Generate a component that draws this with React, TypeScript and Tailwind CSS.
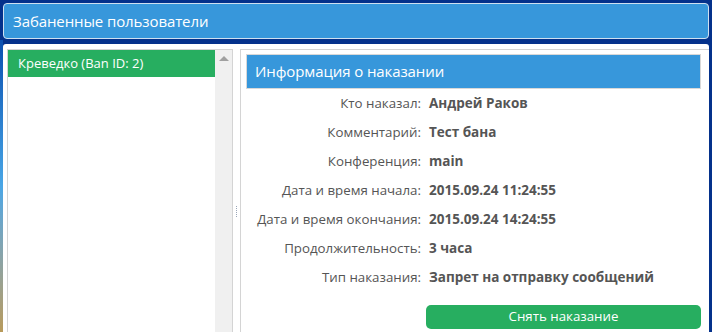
import React from 'react';

const rows = [
  { label: 'Кто наказал:', value: 'Андрей Раков' },
  { label: 'Комментарий:', value: 'Тест бана' },
  { label: 'Конференция:', value: 'main' },
  { label: 'Дата и время начала:', value: '2015.09.24 11:24:55' },
  { label: 'Дата и время окончания:', value: '2015.09.24 14:24:55' },
  { label: 'Продолжительность:', value: '3 часа' },
  { label: 'Тип наказания:', value: 'Запрет на отправку сообщений' },
];

export default function App() {
  return (
    <div className="relative w-[712px] h-[332px] overflow-hidden bg-[#04318b] flex flex-col pt-[3px] pl-[3px] pr-[3px] font-['Open_Sans','Noto_Sans',sans-serif]">
      {/* wallpaper peeking at the left edge */}
      <div className="absolute left-0 top-[40px] bottom-0 w-[3px] bg-gradient-to-b from-[#0b4fb0] via-[#49a6e6] to-[#b89a5a]" />

      {/* Window title */}
      <div className="h-[36px] shrink-0 rounded-[4px] bg-[#3797db] border border-[#cfe0f0] flex items-center pl-[9px] text-white text-[15px] tracking-[-0.1px]">
        Забаненные пользователи
      </div>

      {/* Body */}
      <div className="mt-[5px] flex-1 bg-white rounded-t-[3px] flex pl-[4px] pt-[5px] relative">
        {/* Left list */}
        <div className="w-[226px] flex border-l border-r border-t border-[#d4d4d4]">
          <div className="flex-1">
            <div className="h-[27px] bg-[#27ae60] text-white text-[13px] flex items-center pl-[10px]">
              Креведко (Ban ID: 2)
            </div>
          </div>
          <div className="w-[17px] bg-[#f0f0f0] flex justify-center pt-[6px]">
            <div className="w-0 h-0 border-l-[5px] border-r-[5px] border-b-[5px] border-l-transparent border-r-transparent border-b-[#a0a0a0]" />
          </div>
        </div>

        {/* Splitter */}
        <div className="w-[7px] flex items-start justify-center">
          <div className="mt-[157px] w-[2px] h-[11px] border-l border-dotted border-[#9aa6b8]" />
        </div>

        {/* Right detail */}
        <div className="flex-1 border-l border-t border-[#d4d4d4] pl-[5px] pr-[8px] pt-[4px]">
          <div className="h-[35px] bg-[#3797db] border border-[#d8d8d8] flex items-center pl-[8px] text-white text-[15px] tracking-[-0.1px]">
            Информация о наказании
          </div>
          <div className="flex flex-col">
            {rows.map((r) => (
              <div key={r.label} className="h-[29px] flex items-center text-[#555555]">
                <div className="w-[175px] shrink-0 text-right text-[13.3px]">{r.label}</div>
                <div className="pl-[8px] font-bold text-[13.5px]">{r.value}</div>
              </div>
            ))}
          </div>
          <div className="flex pl-[180px] mt-[13px]">
            <button className="flex-1 h-[24px] rounded-[5px] bg-[#27ae60] text-white text-[13.3px] flex items-center justify-center">
              Снять наказание
            </button>
          </div>
        </div>
      </div>
    </div>
  );
}
